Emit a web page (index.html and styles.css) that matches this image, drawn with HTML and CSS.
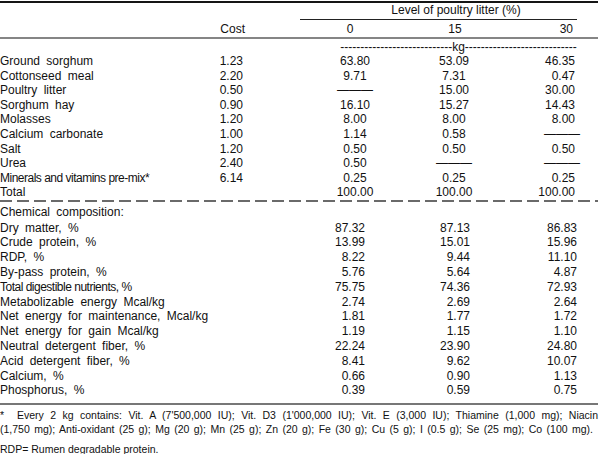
FILE: index.html
```html
<!DOCTYPE html>
<html lang="en">
<head>
<meta charset="utf-8">
<title>Diet composition</title>
<link rel="stylesheet" href="styles.css">
</head>
<body>
<div class="sheet">
  <div class="row head-level">
    <div class="level">Level of poultry litter (%)</div>
  </div>
  <div class="row head-cols">
    <div></div>
    <div class="cost-h">Cost</div>
    <div class="h0">0</div>
    <div class="h15">15</div>
    <div class="h30">30</div>
  </div>
  <div class="row unit">
    <div class="kg">----------------------------kg----------------------------</div>
  </div>
  <div class="ingredients">
    <div class="row"><div class="lbl">Ground sorghum</div><div class="cost">1.23</div><div class="v0">63.80</div><div class="v15">53.09</div><div class="v30">46.35</div></div>
    <div class="row"><div class="lbl">Cottonseed meal</div><div class="cost">2.20</div><div class="v0">9.71</div><div class="v15">7.31</div><div class="v30">0.47</div></div>
    <div class="row"><div class="lbl">Poultry litter</div><div class="cost">0.50</div><div class="v0">———</div><div class="v15">15.00</div><div class="v30">30.00</div></div>
    <div class="row"><div class="lbl">Sorghum hay</div><div class="cost">0.90</div><div class="v0">16.10</div><div class="v15">15.27</div><div class="v30">14.43</div></div>
    <div class="row"><div class="lbl">Molasses</div><div class="cost">1.20</div><div class="v0">8.00</div><div class="v15">8.00</div><div class="v30">8.00</div></div>
    <div class="row"><div class="lbl">Calcium carbonate</div><div class="cost">1.00</div><div class="v0">1.14</div><div class="v15">0.58</div><div class="v30 none">———</div></div>
    <div class="row"><div class="lbl">Salt</div><div class="cost">1.20</div><div class="v0">0.50</div><div class="v15">0.50</div><div class="v30">0.50</div></div>
    <div class="row"><div class="lbl">Urea</div><div class="cost">2.40</div><div class="v0">0.50</div><div class="v15">———</div><div class="v30 none">———</div></div>
    <div class="row"><div class="lbl tight">Minerals and vitamins pre-mix*</div><div class="cost">6.14</div><div class="v0">0.25</div><div class="v15">0.25</div><div class="v30">0.25</div></div>
    <div class="row"><div class="lbl">Total</div><div class="cost"></div><div class="v0">100.00</div><div class="v15">100.00</div><div class="v30">100.00</div></div>
  </div>
  <div class="dashed"></div>
  <div class="chem">
    <div class="row chem-title"><div class="lbl">Chemical composition:</div></div>
    <div class="row"><div class="lbl">Dry matter, %</div><div></div><div class="v0">87.32</div><div class="v15">87.13</div><div class="v30">86.83</div></div>
    <div class="row"><div class="lbl">Crude protein, %</div><div></div><div class="v0">13.99</div><div class="v15">15.01</div><div class="v30">15.96</div></div>
    <div class="row"><div class="lbl">RDP, %</div><div></div><div class="v0">8.22</div><div class="v15">9.44</div><div class="v30">11.10</div></div>
    <div class="row"><div class="lbl">By-pass protein, %</div><div></div><div class="v0">5.76</div><div class="v15">5.64</div><div class="v30">4.87</div></div>
    <div class="row"><div class="lbl tight">Total digestible nutrients, %</div><div></div><div class="v0">75.75</div><div class="v15">74.36</div><div class="v30">72.93</div></div>
    <div class="row"><div class="lbl">Metabolizable energy Mcal/kg</div><div></div><div class="v0">2.74</div><div class="v15">2.69</div><div class="v30">2.64</div></div>
    <div class="row"><div class="lbl">Net energy for maintenance, Mcal/kg</div><div></div><div class="v0">1.81</div><div class="v15">1.77</div><div class="v30">1.72</div></div>
    <div class="row"><div class="lbl">Net energy for gain Mcal/kg</div><div></div><div class="v0">1.19</div><div class="v15">1.15</div><div class="v30">1.10</div></div>
    <div class="row"><div class="lbl">Neutral detergent fiber, %</div><div></div><div class="v0">22.24</div><div class="v15">23.90</div><div class="v30">24.80</div></div>
    <div class="row"><div class="lbl">Acid detergent fiber, %</div><div></div><div class="v0">8.41</div><div class="v15">9.62</div><div class="v30">10.07</div></div>
    <div class="row"><div class="lbl">Calcium, %</div><div></div><div class="v0">0.66</div><div class="v15">0.90</div><div class="v30">1.13</div></div>
    <div class="row last"><div class="lbl">Phosphorus, %</div><div></div><div class="v0">0.39</div><div class="v15">0.59</div><div class="v30">0.75</div></div>
  </div>
  <div class="notes">
    <p class="note-l1">*&nbsp; Every 2 kg contains: Vit. A (7'500,000 IU); Vit. D3 (1'000,000 IU); Vit. E (3,000 IU); Thiamine (1,000 mg); Niacin</p>
    <p class="note-l2">(1,750 mg); Anti-oxidant (25 g); Mg (20 g); Mn (25 g); Zn (20 g); Fe (30 g); Cu (5 g); I (0.5 g); Se (25 mg); Co (100 mg).</p>
    <p class="note-rdp">RDP= Rumen degradable protein.</p>
  </div>
</div>
</body>
</html>
```

FILE: styles.css
```css
html, body {
  margin: 0;
  padding: 0;
  background: #ffffff;
}

body {
  font-family: "Liberation Sans", Arial, sans-serif;
  font-size: 12px;
  color: #111111;
}

.sheet {
  width: 598px;
  padding-top: 1px;
}

.row {
  display: grid;
  grid-template-columns: 205px 45px 150px 110px 88px;
  line-height: 14.6px;
  white-space: nowrap;
}

/* header: level */
.head-level {
  border-top: 2px solid #151515;
  line-height: 14px;
}

.level {
  grid-column: 3 / 6;
  margin-left: 50px;
  margin-right: 21px;
  padding-left: 35px;
  padding-bottom: 2px;
  text-align: center;
  border-bottom: 1px solid #222222;
}

/* header: columns */
.head-cols {
  line-height: 14px;
  padding-top: 2px;
  padding-bottom: 1px;
  border-bottom: 2px solid #858585;
}

.cost-h {
  text-align: right;
  padding-right: 5px;
}

.h0 {
  text-align: center;
  padding-left: 50px;
}

.h15 {
  text-align: center;
}

.h30 {
  text-align: right;
  padding-right: 25px;
}

/* kg unit line */
.unit {
  line-height: 14px;
  padding-top: 1px;
}

.kg {
  grid-column: 3 / 6;
  margin-left: 90px;
  margin-right: 21px;
  text-align: center;
}

/* labels */
.lbl {
  word-spacing: 3px;
}

.lbl.tight {
  word-spacing: 0;
  letter-spacing: -0.5px;
}

.cost {
  text-align: right;
  padding-right: 7px;
}

/* ingredient values */
.ingredients .v0 {
  text-align: center;
  padding-left: 60px;
}

.ingredients .v15 {
  text-align: center;
  padding-right: 2px;
}

.ingredients .v30 {
  text-align: right;
  padding-right: 23px;
}

.ingredients .v30.none {
  padding-right: 18px;
}

/* dashed separator */
.dashed {
  height: 2px;
  background: repeating-linear-gradient(to right, #6a6a6a 0 12px, transparent 12px 17px);
}

/* chemical composition */
.chem-title {
  padding-top: 3px;
}

.chem .row {
  line-height: 14.8px;
}

.chem .chem-title {
  line-height: 14.6px;
  margin-bottom: 1px;
}

.chem .v0 {
  text-align: right;
  padding-right: 35px;
}

.chem .v15 {
  text-align: right;
  padding-right: 40px;
}

.chem .v30 {
  text-align: right;
  padding-right: 21px;
}

.chem .last {
  padding-bottom: 5px;
  border-bottom: 2px solid #777777;
}

/* notes */
.notes {
  font-size: 10.5px;
  padding-top: 3px;
}

.notes p {
  margin: 0;
  line-height: 14px;
}

.note-l1 {
  text-align: justify;
  text-align-last: justify;
}

.note-l2 {
  width: 593px;
  text-align: justify;
  text-align-last: justify;
}

.note-rdp {
  margin-top: 6px !important;
  white-space: nowrap;
}
```
